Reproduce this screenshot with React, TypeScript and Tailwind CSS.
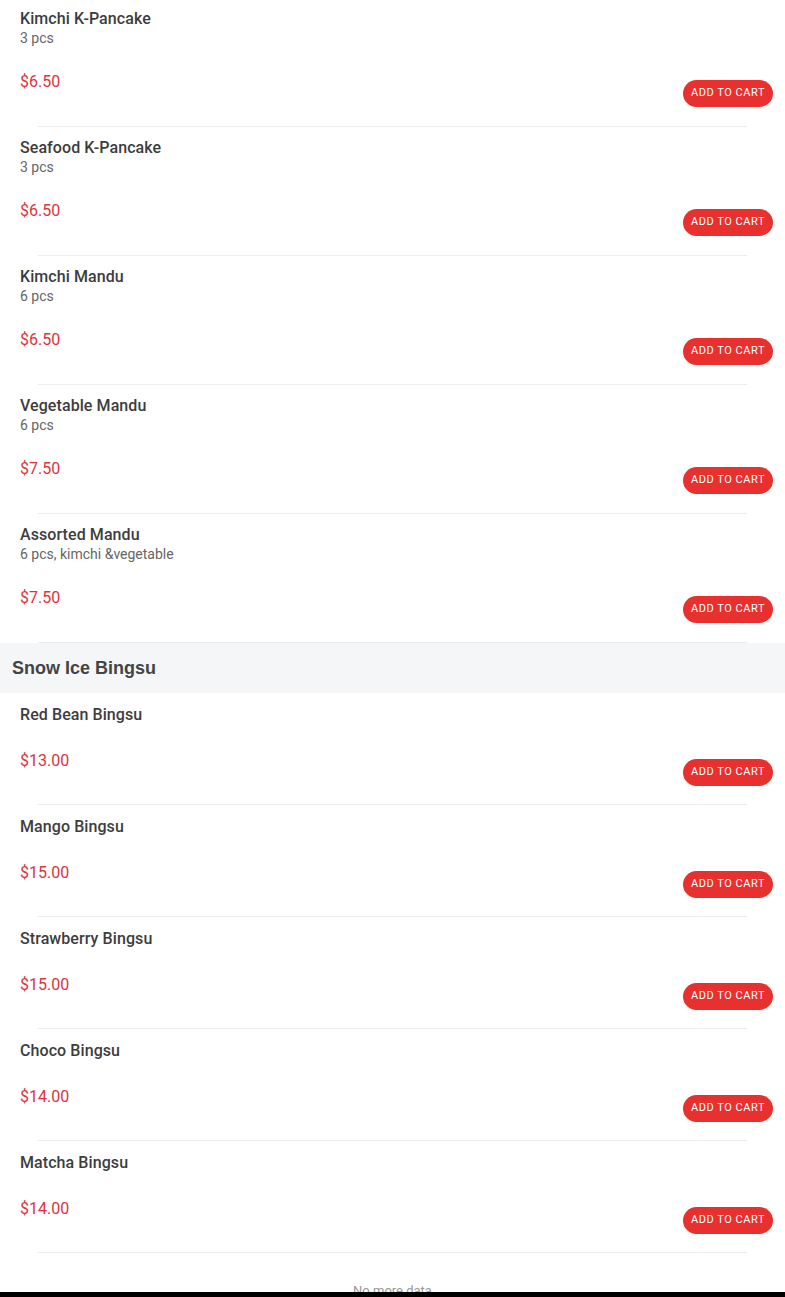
type Item = { name: string; desc?: string; price: string };

const appetizers: Item[] = [
  { name: "Kimchi K-Pancake", desc: "3 pcs", price: "$6.50" },
  { name: "Seafood K-Pancake", desc: "3 pcs", price: "$6.50" },
  { name: "Kimchi Mandu", desc: "6 pcs", price: "$6.50" },
  { name: "Vegetable Mandu", desc: "6 pcs", price: "$7.50" },
  { name: "Assorted Mandu", desc: "6 pcs, kimchi &vegetable", price: "$7.50" },
];

const bingsu: Item[] = [
  { name: "Red Bean Bingsu", price: "$13.00" },
  { name: "Mango Bingsu", price: "$15.00" },
  { name: "Strawberry Bingsu", price: "$15.00" },
  { name: "Choco Bingsu", price: "$14.00" },
  { name: "Matcha Bingsu", price: "$14.00" },
];

function MenuRow({ item, first }: { item: Item; first?: boolean }) {
  const pad = first ? "pt-[9px] pb-[19px]" : item.desc ? "pt-[11px] pb-[19px]" : "pt-[12px] pb-[18px]";
  return (
    <div className="bg-white">
      <div className={`pl-5 pr-3 ${pad}`}>
        <div className="text-[16px] leading-[20px] font-medium tracking-[0.005em] text-[#3d3d3d]">{item.name}</div>
        {item.desc && <div className="text-[14px] leading-[18px] text-[#666]">{item.desc}</div>}
        <div className={`flex items-start justify-between ${item.desc ? "mt-6" : "mt-[25px]"}`}>
          <div className="text-[16px] leading-[22px] text-[#dc343c]">{item.price}</div>
          <button className="mt-[9px] h-[27px] w-[90px] rounded-full bg-[#e8302f] text-[11px] font-normal uppercase tracking-[0.05em] text-white">
            Add to cart
          </button>
        </div>
      </div>
      <div className="mx-[38px] h-px bg-[#ececec]" />
    </div>
  );
}

export default function App() {
  return (
    <div className="min-h-[1297px] bg-white font-['Roboto',sans-serif]">
      {appetizers.map((it, i) => (
        <MenuRow key={it.name} item={it} first={i === 0} />
      ))}

      <div className="flex h-[50px] items-center bg-[#f5f6f8] px-3">
        <span className="font-['Liberation_Sans',Arial,sans-serif] text-[18px] font-bold text-[#444]">Snow Ice Bingsu</span>
      </div>

      {bingsu.map((it) => (
        <MenuRow key={it.name} item={it} />
      ))}

      <div className="pt-[29px] pb-10 text-center text-[13px] leading-[18px] text-[#999]">No more data</div>

      <div className="fixed bottom-0 left-0 h-[5px] w-full bg-black" />
    </div>
  );
}
